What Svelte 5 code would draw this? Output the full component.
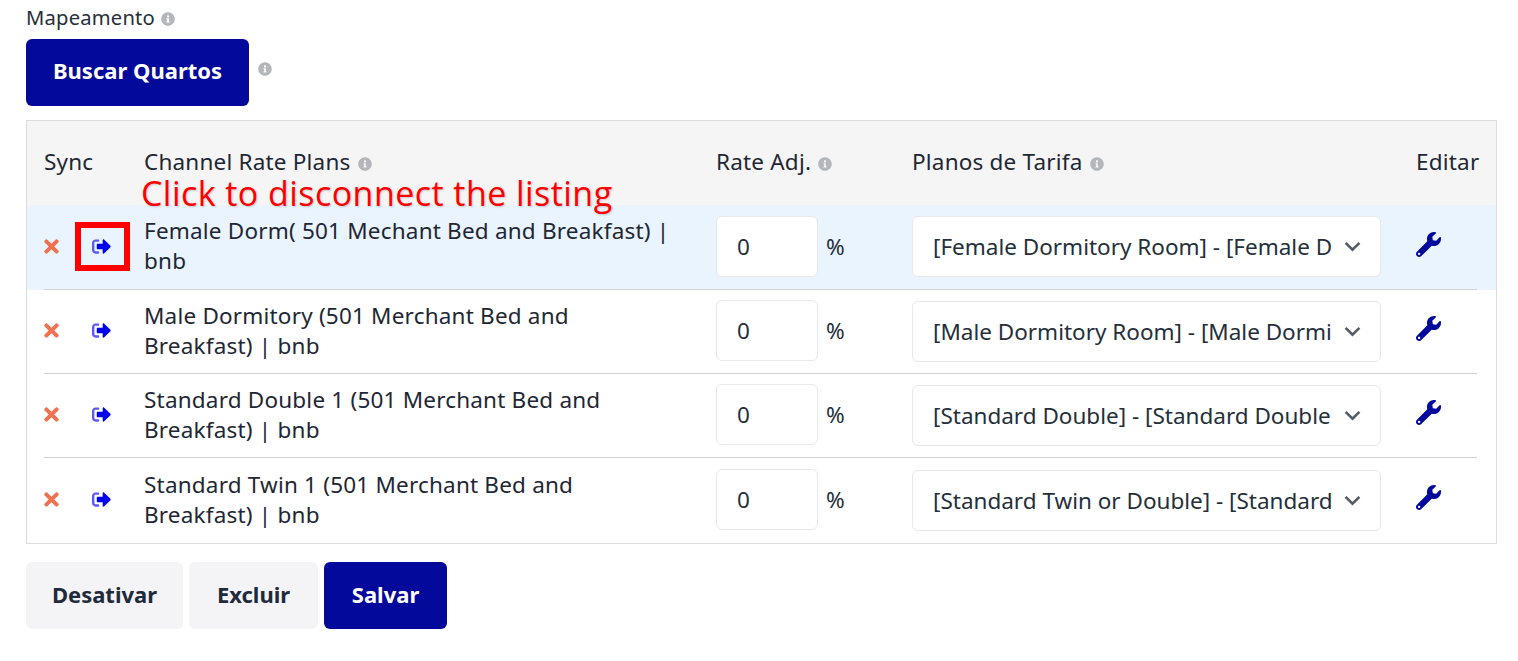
<script>
  const info = "M256 8C119 8 8 119.08 8 256c0 137 111 248 248 248s248-111 248-248C504 119.08 393 8 256 8zm0 110c23.2 0 42 18.8 42 42s-18.8 42-42 42-42-18.8-42-42 18.8-42 42-42zm56 254c0 6.6-5.4 12-12 12h-88c-6.6 0-12-5.4-12-12v-24c0-6.6 5.4-12 12-12h12v-64h-12c-6.6 0-12-5.4-12-12v-24c0-6.6 5.4-12 12-12h64c6.6 0 12 5.4 12 12v100h12c6.6 0 12 5.4 12 12v24z";
  const rows = [
    { name: "Female Dorm( 501 Mechant Bed and Breakfast) | bnb", plan: "[Female Dormitory Room] - [Female Dormitory Rate]" },
    { name: "Male Dormitory (501 Merchant Bed and Breakfast) | bnb", plan: "[Male Dormitory Room] - [Male Dormitory Rate]" },
    { name: "Standard Double 1 (501 Merchant Bed and Breakfast) | bnb", plan: "[Standard Double] - [Standard Double Rate]" },
    { name: "Standard Twin 1 (501 Merchant Bed and Breakfast) | bnb", plan: "[Standard Twin or Double] - [Standard Rate]" }
  ];
</script>

{#snippet tip(cls)}
  <svg class="info {cls}" viewBox="0 0 512 512" aria-hidden="true"><path d={info} /></svg>
{/snippet}

<main class="page">
  <div class="label">Mapeamento {@render tip("")}</div>
  <div class="search">
    <button class="btn primary search-btn">Buscar Quartos</button>
    {@render tip("search-tip")}
  </div>

  <section class="table">
    <div class="grid head">
      <div>Sync</div>
      <div>Channel Rate Plans {@render tip("")}</div>
      <div>Rate Adj. {@render tip("")}</div>
      <div>Planos de Tarifa {@render tip("")}</div>
      <div>Editar</div>
    </div>
    <div class="body">
      {#each rows as row, i}
        <div class="row" class:active={i === 0}>
          <div class="grid cells">
            <div class="sync">
              <svg class="x" viewBox="0 0 352 512" aria-hidden="true"><path d="M242.72 256l100.07-100.07c12.28-12.28 12.28-32.19 0-44.48l-22.24-22.24c-12.28-12.28-32.19-12.28-44.48 0L176 189.28 75.93 89.21c-12.28-12.28-32.19-12.28-44.48 0L9.21 111.45c-12.28 12.28-12.28 32.19 0 44.48L109.28 256 9.21 356.07c-12.28 12.28-12.28 32.19 0 44.48l22.24 22.24c12.28 12.28 32.2 12.28 44.48 0L176 322.72l100.07 100.07c12.28 12.28 32.2 12.28 44.48 0l22.24-22.24c12.28-12.28 12.28-32.19 0-44.48L242.72 256z" /></svg>
              <svg class="out" viewBox="0 0 512 512" aria-hidden="true"><path class="arrow" d="M497 273L329 441c-15 15-41 4.5-41-17v-96H152c-13.3 0-24-10.7-24-24v-96c0-13.3 10.7-24 24-24h136V88c0-21.4 25.9-32 41-17l168 168c9.3 9.4 9.3 24.6 0 34z" /><path class="bracket" d="M192 436v-40c0-6.6-5.4-12-12-12H96c-17.7 0-32-14.3-32-32V160c0-17.7 14.3-32 32-32h84c6.6 0 12-5.4 12-12V76c0-6.6-5.4-12-12-12H96c-53 0-96 43-96 96v192c0 53 43 96 96 96h84c6.6 0 12-5.4 12-12z" /></svg>
            </div>
            <div class="name">{row.name}</div>
            <div class="rate"><input value="0" aria-label="Rate" /><span>%</span></div>
            <div class="plan">
              <select aria-label="Plano"><option>{row.plan}</option></select>
              <svg class="chev" viewBox="0 0 16 10" aria-hidden="true"><path d="M1.5 1.5 8 8l6.5-6.5" /></svg>
            </div>
            <div>
              <svg class="wrench" viewBox="0 0 512 512" aria-hidden="true"><path d="M507.73 109.1c-2.24-9.03-13.54-12.09-20.12-5.51l-74.36 74.36-67.88-11.31-11.31-67.88 74.36-74.36c6.62-6.62 3.43-17.9-5.66-20.16-47.38-11.74-99.55.91-136.58 37.93-39.64 39.64-50.55 97.1-34.05 147.2L18.74 402.76c-24.99 24.99-24.99 65.51 0 90.5 24.99 24.99 65.51 24.99 90.5 0l213.21-213.21c50.12 16.71 107.47 5.68 147.37-34.22 37.07-37.07 49.7-89.32 37.91-136.73zM64 472c-13.25 0-24-10.75-24-24 0-13.26 10.75-24 24-24s24 10.74 24 24c0 13.25-10.75 24-24 24z" /></svg>
            </div>
          </div>
        </div>
      {/each}
    </div>
    <div class="callout">Click to disconnect the listing</div>
    <div class="redbox"></div>
  </section>

  <div class="actions">
    <button class="btn light desativar">Desativar</button>
    <button class="btn light excluir">Excluir</button>
    <button class="btn primary salvar">Salvar</button>
  </div>
</main>

<style>
  :global(body) { margin: 0; background: #fff; }
  .page {
    padding: 5px 21px 0 26px;
    font-family: "Noto Sans", "Open Sans", sans-serif;
    font-size: 22.5px;
    letter-spacing: 0.2px;
    color: #252f3a;
  }
  .label { height: 34px; line-height: 25px; font-size: 20.2px; }
  .info { width: 14px; height: 14px; fill: #b3b6ba; vertical-align: -1px; margin-left: 1px; }
  .search { display: flex; align-items: flex-start; gap: 8px; height: 81px; }
  .search-tip { margin-top: 23px; }
  .btn {
    box-sizing: border-box;
    height: 67px;
    border: 0;
    border-radius: 6px;
    font: 700 22px "Noto Sans", sans-serif;
    padding: 0 0 3px;
  }
  .primary { background: #03099b; color: #fff; }
  .light { background: #f4f4f7; color: #1f2a3b; }
  .search-btn { width: 223px; padding-bottom: 5px; }
  .table {
    position: relative;
    width: 1469px;
    border: 1px solid #dcdcdc;
    background: #fff;
  }
  .grid {
    display: grid;
    grid-template-columns: 100px 572px 196px 504px 62px;
    align-items: center;
  }
  .head {
    height: 84px;
    padding: 0 19px 0 17px;
    background: #f5f5f5;
    color: #1e2733;
    line-height: 26px;
  }
  .head > div { margin-top: -3px; }
  .row { padding: 0 19px 0 17px; }
  .row.active { background: #eaf4fe; }
  .cells { height: 81px; padding-bottom: 2px; border-bottom: 1px solid #cfcfcf; }
  .row:first-child .cells { height: 82px; }
  .row:last-child .cells { height: 83px; border-bottom: 0; }
  .sync { display: flex; align-items: center; }
  .x { width: 17px; height: 21px; fill: #f0704f; margin-left: -1px; }
  .out { width: 19px; height: 19px; margin-left: 32px; }
  .arrow { fill: #0000f0; }
  .bracket { fill: #5a5cf5; }
  .name { line-height: 30px; width: 535px; color: #1e2733; }
  .rate { display: flex; align-items: center; gap: 8px; }
  .rate input {
    box-sizing: border-box;
    width: 102px;
    height: 61px;
    border: 1px solid #e6e8ec;
    border-radius: 6px;
    background: #fff;
    padding: 0 20px;
    font: 22.5px "Noto Sans", sans-serif;
    color: #252f3a;
    outline: 0;
  }
  .plan { position: relative; width: 469px; margin-top: 1px; }
  .plan select {
    display: block;
    box-sizing: border-box;
    width: 469px;
    height: 61px;
    appearance: none;
    border: 1px solid #e6e8ec;
    border-radius: 6px;
    background: #fff;
    padding: 0 48px 0 20px;
    font: 22.5px "Noto Sans", sans-serif;
    color: #252f3a;
    outline: 0;
  }
  .chev {
    position: absolute;
    right: 20px;
    top: 25px;
    width: 17px;
    height: 11px;
    fill: none;
    stroke: #555b63;
    stroke-width: 2.4;
    pointer-events: none;
  }
  .wrench { width: 25px; height: 25px; fill: #03099b; display: block; margin-top: -4px; }
  .callout {
    position: absolute;
    left: 114px;
    top: 57px;
    font: 34px/30px "Open Sans", sans-serif;
    letter-spacing: 0.45px;
    color: #f00;
    text-shadow: 1px 1px 2px rgba(0,0,0,.18);
    white-space: nowrap;
  }
  .redbox {
    position: absolute;
    left: 48px;
    top: 101px;
    box-sizing: border-box;
    width: 55px;
    height: 49px;
    border: 6px solid #f00;
  }
  .actions { display: flex; gap: 6px; margin-top: 18px; }
  .desativar { width: 157px; }
  .excluir { width: 129px; }
  .salvar { width: 123px; }
</style>
